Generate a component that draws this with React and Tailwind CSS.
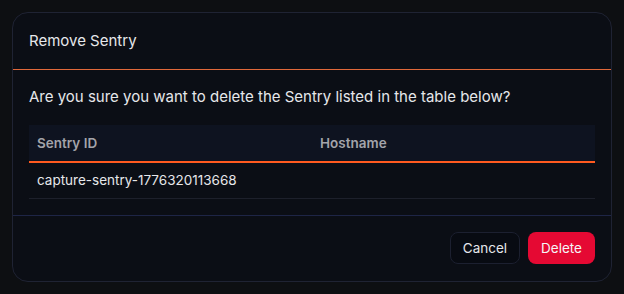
import React from "react";

const App = () => {
  return (
    <div
      className="min-h-[294px] w-[624px] bg-[#0d0f12] p-3"
      style={{ fontFamily: "Inter, 'Liberation Sans', sans-serif" }}
    >
      <div className="w-[600px] h-[270px] rounded-2xl border border-[#1f2333] bg-[#0b0e15] flex flex-col overflow-hidden">
        {/* Header */}
        <div className="px-4 h-[57px] flex items-center border-b border-[#e0683a]">
          <h2 className="text-[15px] text-[#e6e7ea]">Remove Sentry</h2>
        </div>

        {/* Body */}
        <div className="px-4 pt-[15px] pb-4 border-b border-[#1e2546]">
          <p className="text-[15px] leading-6 text-[#e6e7ea]">
            Are you sure you want to delete the Sentry listed in the table below?
          </p>
          <div className="mt-4 text-[13.5px]">
            <div className="grid grid-cols-2 h-[38px] items-center bg-[#0e1320] border-b-2 border-[#ff5a1f]">
              <div className="px-2 font-semibold text-[#a3a4aa]">Sentry ID</div>
              <div className="px-2 font-semibold text-[#a3a4aa]">Hostname</div>
            </div>
            <div className="grid grid-cols-2 h-[36px] items-center border-b border-[#1d202b]">
              <div className="px-2 text-[#e6e7ea]">capture-sentry-1776320113668</div>
              <div className="px-2"></div>
            </div>
          </div>
        </div>

        {/* Footer */}
        <div className="flex justify-end gap-2 px-4 pt-4">
          <button className="h-8 px-3 rounded-lg border border-[#1c2030] bg-[#080b12] text-[13.5px] text-[#e6e7ea]">
            Cancel
          </button>
          <button className="h-8 px-[13px] rounded-lg bg-[#e50933] text-[13.5px] text-[#f5f5f7]">
            Delete
          </button>
        </div>
      </div>
    </div>
  );
};

export default App;
